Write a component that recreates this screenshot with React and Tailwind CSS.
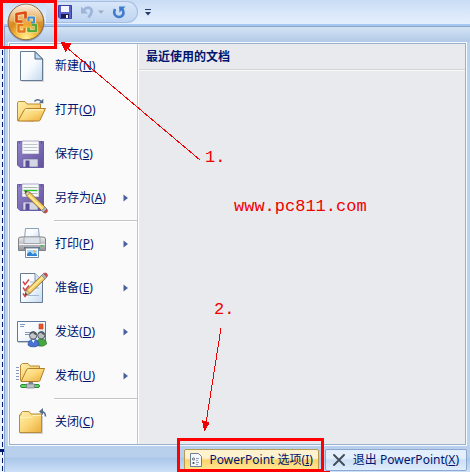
import { useState } from 'react';

const uiFont = "font-['Noto_Sans','Noto_Sans_CJK_SC',sans-serif]";

function Defs() {
    return (
        <svg width="0" height="0" className="absolute" aria-hidden="true">
            <defs>
                <linearGradient id="paper" x1="0" y1="0" x2="1" y2="1">
                    <stop offset="0" stopColor="#ffffff" /><stop offset="0.5" stopColor="#f6faff" /><stop offset="1" stopColor="#c3d9ee" />
                </linearGradient>
                <linearGradient id="folder" x1="0" y1="0" x2="1" y2="1">
                    <stop offset="0" stopColor="#fff0b0" /><stop offset="0.5" stopColor="#fbd778" /><stop offset="1" stopColor="#eaac3c" />
                </linearGradient>
                <linearGradient id="purple" x1="0" y1="0" x2="1" y2="1">
                    <stop offset="0" stopColor="#9485cc" /><stop offset="1" stopColor="#62529c" />
                </linearGradient>
                <linearGradient id="metal" x1="0" y1="0" x2="0" y2="1">
                    <stop offset="0" stopColor="#ededed" /><stop offset="0.45" stopColor="#c4c6ca" /><stop offset="1" stopColor="#8f9196" />
                </linearGradient>
                <radialGradient id="orb" cx="0.5" cy="0.95" r="0.95">
                    <stop offset="0" stopColor="#fff09a" /><stop offset="0.25" stopColor="#fbc545" /><stop offset="0.55" stopColor="#d98a1c" /><stop offset="1" stopColor="#e6c088" />
                </radialGradient>
                <linearGradient id="gloss" x1="0" y1="0" x2="0" y2="1">
                    <stop offset="0" stopColor="#ffffff" stopOpacity="0.8" /><stop offset="1" stopColor="#f3c27a" stopOpacity="0.35" />
                </linearGradient>
            </defs>
        </svg>
    );
}

// Shared by "save as" and "prepare"
function Pencil({ transform }) {
    return (
        <g transform={transform}>
            <path d="M0 0 L1.5 -5 L18 -21 L21.5 -17.5 L5 -1.5 Z" fill="#f6ca5c" stroke="#77603a" strokeWidth="0.8" />
            <path d="M3.5 -4 L19.5 -19.5" stroke="#fff0a8" strokeWidth="1.3" />
            <path d="M0 0 L1.5 -5 L5 -1.5 Z" fill="#e9d0aa" stroke="#77603a" strokeWidth="0.5" />
            <path d="M0 0 L0.7 -2.2 L2.2 -0.7 Z" fill="#222" />
            <path d="M16.5 -19.5 L18.5 -21.5 L22 -18 L20 -16 Z" fill="#a9b2bd" stroke="#70757c" strokeWidth="0.5" />
            <path d="M18.5 -21.5 Q20.8 -22.8 22 -21.3 Q23.2 -19.8 22 -18 Z" fill="#cf4a4a" stroke="#8e3434" strokeWidth="0.5" />
        </g>
    );
}

function Floppy() {
    return (
        <>
            <path d="M3.5 5.5 H29.5 V31.5 H6 L3.5 29 Z" fill="url(#purple)" stroke="#6a5ca6" />
            <path d="M8 5 H25 V18 H8 Z" fill="#f6f8fb" stroke="#8079ab" strokeWidth="0.6" />
            <path d="M9 23 H24 V31 H9 Z" fill="#d3d6e3" stroke="#6d629d" strokeWidth="0.6" />
            <path d="M11.5 24.5 H15.5 V31 H11.5 Z" fill="#5b4d95" />
            <path d="M5 7 H6 M27 7 H28" stroke="#443878" />
        </>
    );
}

const icons = {
    new: (
        <>
            <path d="M8 33.5 H29.5 V11" fill="none" stroke="#000" strokeOpacity="0.14" />
            <path d="M6.5 3.5 H21 L28.5 11 V32.5 H6.5 Z" fill="url(#paper)" stroke="#667a92" />
            <path d="M21 3.5 V11 H28.5 Z" fill="#bed7ef" stroke="#4d6480" strokeLinejoin="round" />
        </>
    ),
    open: (
        <>
            <path d="M3.5 28.5 V10.5 L5 9.5 H11 L13 12 H26.5 V17 L20 29 Z" fill="url(#folder)" stroke="#b98a38" />
            <path d="M4 29 L10.5 17.5 Q11 16.5 12.5 16.5 H31.5 L26 28.2 Q25.6 29 24.5 29 Z" fill="url(#folder)" stroke="#b27d27" />
            <path d="M11.5 17.8 H29.5" stroke="#fff6cc" />
            <path d="M20.5 9.5 Q23.5 5.8 28 10" fill="none" stroke="#576d8c" strokeWidth="1.4" />
            <path d="M29.3 6.8 V11.3 H24.8 Z" fill="#576d8c" />
        </>
    ),
    save: (
        <>
            <Floppy />
            <path d="M9.5 8.5 H23.5 M9.5 11.5 H23.5 M9.5 14.5 H23.5" stroke="#bfc4ca" />
        </>
    ),
    saveAs: (
        <>
            <g transform="translate(0 -1)">
                <Floppy />
                <path d="M9.5 8.5 H23.5 M9.5 14.5 H23.5" stroke="#aeb6b0" />
                <path d="M9.5 11.5 H23.5" stroke="#26c32c" strokeWidth="1.4" />
            </g>
            <Pencil transform="translate(11 11) scale(1 -1)" />
        </>
    ),
    print: (
        <>
            <path d="M10.5 13 L11.5 2.5 H24.5 L25.5 13 Z" fill="url(#paper)" stroke="#8ba0b8" />
            <path d="M4.5 13 Q4.5 11 7 11 H29 Q31.5 11 31.5 13 V24.5 H4.5 Z" fill="url(#metal)" stroke="#808286" />
            <path d="M10 11 H26 V17.5 H10 Z" fill="#dce2e9" stroke="#909398" strokeWidth="0.7" />
            <path d="M5 18.5 H31" stroke="#f4f4f4" />
            <path d="M10 21 H26 V23 H10 Z" fill="#6b6e73" />
            <path d="M26.5 19.8 H29.5" stroke="#39bf3d" strokeWidth="1.4" />
            <path d="M11.5 22 H24.5 V31.5 H11.5 Z" fill="#fff" stroke="#6b8cae" />
            <path d="M13 24 H23 V30 H13 Z" fill="#a8dcfb" />
            <path d="M13 30 V28 L16 25.5 L19 28.5 L21 26.8 L23 29 V30 Z" fill="#2f7fcd" />
            <circle cx="20.5" cy="25.2" r="1" fill="#f6a24e" />
        </>
    ),
    prepare: (
        <>
            <path d="M6.5 3.5 H21 L28.5 11 V32.5 H6.5 Z" fill="url(#paper)" stroke="#667a92" />
            <path d="M21 3.5 V11 H28.5" fill="#d5e6f6" stroke="#7f93ab" />
            <path d="M16 12 H24 M15 18 H25 M13 25.5 H25" stroke="#a4b9d2" />
            <path d="M9 11.5 L11 14.5 L15 9.5 M9 17.5 L11 20.5 L15 15.5 M9 23.5 L11 26.5 L14 22.5" fill="none" stroke="#d7434b" strokeWidth="1.5" />
            <Pencil transform="translate(11 25)" />
        </>
    ),
    send: (
        <>
            <path d="M4 28.5 H20" stroke="#000" strokeOpacity="0.2" />
            <path d="M3.5 7.5 H31.5 V27.5 H3.5 Z" fill="url(#paper)" stroke="#5f7a9f" />
            <path d="M6 10.5 H11 M6 12.5 H10" stroke="#7b9acb" />
            <path d="M11 18.5 H19 M11 20.5 H17" stroke="#7f97bb" />
            <path d="M25 10 H29 V15 H25 Z" fill="#e95426" stroke="#bf3d1d" strokeWidth="0.6" />
            <path d="M22.5 31 Q22 25 27 25 Q32.5 25 32.5 30 Q30 33 25 32 Z" fill="#46a83d" stroke="#28792a" strokeWidth="0.7" />
            <circle cx="27.3" cy="21.3" r="3.6" fill="#b9bec3" stroke="#4c5258" strokeWidth="0.9" />
            <path d="M24 20 Q24.5 17 28 17.2 Q31 18 30.7 21 Q28 20.5 27 18.8 Z" fill="#565c63" />
            <path d="M14 31 Q14 25.5 19.5 25.5 Q25 25.5 25 31 Q22 33.3 19 32.8 Q16 33.2 14 31 Z" fill="#4a72cf" stroke="#294a9c" strokeWidth="0.7" />
            <path d="M17.8 26 L19.3 29 L20.8 26 Z" fill="#fff" />
            <circle cx="19.2" cy="21.5" r="3.7" fill="#c5c9cc" stroke="#4c5258" strokeWidth="0.9" />
            <path d="M15.8 20.5 Q16 17.3 19.7 17.3 Q22.7 17.8 22.7 21.4 Q20 20.7 19 19 Z" fill="#565c63" />
        </>
    ),
    publish: (
        <>
            <path d="M2 9.5 H5 M2 12.5 H5 M2 15.5 H5 M2 18.5 H5 M2 21.5 H5" stroke="#8797c0" />
            <path d="M6.5 22.5 V7 L8.5 5.5 H14 L16 8 H25.5 V12 L22 23 Z" fill="url(#folder)" stroke="#b98a38" />
            <path d="M7 23.5 L12.5 12 Q13 10.5 14.5 10.5 H30.5 L26 22.5 Q25.6 23.5 24.5 23.5 Z" fill="url(#folder)" stroke="#b27d27" />
            <path d="M15 24 H18.5 V27 H15 Z" fill="#8b9096" stroke="#5e6368" strokeWidth="0.6" />
            <rect x="6.5" y="26.5" width="19" height="3" rx="1.5" fill="#5ed35f" stroke="#2c8b37" />
            <path d="M12.5 26 H20.5 V30 H12.5 Z" fill="#b9bec4" stroke="#6f757c" strokeWidth="0.7" />
        </>
    ),
    close: (
        <>
            <path d="M6 29.5 H28.5 V12" fill="none" stroke="#000" strokeOpacity="0.16" />
            <path d="M5.5 28.5 V11 H7 V9 L8.5 7.5 H15 L17 10 H27.5 V28.5 Z" fill="url(#folder)" stroke="#b98a38" />
            <path d="M6.5 13.5 H17 L18.5 11.5 H27" fill="none" stroke="#fff3bd" />
            <path d="M27.5 7.5 Q31.5 8 31.5 12.5" fill="none" stroke="#576d8c" strokeWidth="1.5" />
            <path d="M25 7.5 L29 4 V11 Z" fill="#576d8c" />
        </>
    ),
};

const groups = [
    [
        { icon: 'new', label: '新建', keyChar: 'N' },
        { icon: 'open', label: '打开', keyChar: 'O' },
        { icon: 'save', label: '保存', keyChar: 'S' },
        { icon: 'saveAs', label: '另存为', keyChar: 'A', sub: true },
    ],
    [
        { icon: 'print', label: '打印', keyChar: 'P', sub: true },
        { icon: 'prepare', label: '准备', keyChar: 'E', sub: true },
        { icon: 'send', label: '发送', keyChar: 'D', sub: true },
        { icon: 'publish', label: '发布', keyChar: 'U', sub: true },
    ],
    [
        { icon: 'close', label: '关闭', keyChar: 'C' },
    ],
];

function MenuItem({ item, onHover }) {
    return (
        <button onMouseEnter={onHover} className="flex w-full h-11 items-center pl-1 pr-2 gap-[5px] text-left hover:bg-[#ffe9a8]">
            <svg width="36" height="36" viewBox="0 0 36 36" aria-hidden="true">{icons[item.icon]}</svg>
            <span className="flex-1 whitespace-nowrap">{item.label}(<u>{item.keyChar}</u>)</span>
            {item.sub && (
                <svg width="6" height="8" viewBox="0 0 6 8" aria-hidden="true">
                    <path d="M0.5 0.5 L5 4 L0.5 7.5 Z" fill="#4a5f9e" />
                </svg>
            )}
        </button>
    );
}

function OfficeOrb() {
    return (
        <svg width="40" height="40" viewBox="0 0 40 40" aria-hidden="true">
            <circle cx="20" cy="20.8" r="18.5" fill="#63718c" fillOpacity="0.55" />
            <circle cx="20" cy="20" r="17.8" fill="url(#orb)" stroke="#8c6940" />
            <path d="M3.5 19 A16.5 16.5 0 0 1 36.5 19 Q20 24 3.5 19 Z" fill="url(#gloss)" />
            <g fill="none" stroke="#fff3cf" strokeOpacity="0.7" strokeLinejoin="round" strokeWidth="4">
                <path d="M16.5 19.5 H10.5 V12 L19.5 10.5 V16.5 M22.5 19 V15.5 H28 V20.5 H25 M17.5 23 H12.5 V29.5 H18.5 V26 M22.5 25.5 V29 H30 V23 H25.5" />
            </g>
            <g fill="none" strokeLinejoin="round">
                <path d="M16.5 19.5 H10.5 V12 L19.5 10.5 V16.5" stroke="#dd4a14" strokeWidth="2.7" />
                <path d="M22.5 19 V15.5 H28 V20.5 H25" stroke="#3f8fd6" strokeWidth="2.2" />
                <path d="M17.5 23 H12.5 V29.5 H18.5 V26" stroke="#e8741a" strokeWidth="2.4" />
                <path d="M22.5 25.5 V29 H30 V23 H25.5" stroke="#58a83a" strokeWidth="2.6" />
            </g>
        </svg>
    );
}

function TopBar() {
    return (
        <header className="flex h-[26px] items-center bg-linear-to-b from-[#c9dcf4] via-[#d8e7f9] to-[#e3effd] border-b-2 border-[#a6c8f3]">
            <button aria-label="Office" className="relative z-10 self-start ml-[2px] mt-[2px] w-10 h-10">
                <OfficeOrb />
            </button>
            <div className="flex h-[22px] items-center w-[92px] pl-3 rounded-r-full border border-l-0 border-[#a3bfe3] bg-linear-to-b from-[#d8e6f8] to-[#bfd5f0]">
                <button aria-label="保存">
                    <svg width="14" height="14" viewBox="0 0 14 14">
                        <path d="M0.5 0.5 H13.5 V13.5 H2 L0.5 12 Z" fill="#5a63cc" stroke="#3840a4" />
                        <path d="M3 1 H11 V7 H3 Z" fill="#f3f6ff" />
                        <path d="M3 9 H11 V13 H3 Z" fill="#1d1d52" />
                        <path d="M8 10 H10 V13 H8 Z" fill="#fff" />
                    </svg>
                </button>
                <button aria-label="撤消" className="ml-2">
                    <svg width="14" height="14" viewBox="0 0 14 14" fill="none">
                        <path d="M3.5 5.5 Q6.5 1.5 10 3 Q14 6 8.5 12.5" stroke="#9cb5d9" strokeWidth="2.8" />
                        <path d="M1 1.5 V8.5 H8 Z" fill="#9cb5d9" />
                    </svg>
                </button>
                <button aria-label="撤消选项" className="ml-1">
                    <svg width="6" height="4" viewBox="0 0 6 4"><path d="M0 0.5 H6 L3 3.8 Z" fill="#9eacc2" /></svg>
                </button>
                <button aria-label="恢复" className="ml-2">
                    <svg width="14" height="14" viewBox="0 0 14 14" fill="none">
                        <path d="M3 4 Q1 9 4 11 Q7 13 10 11 Q13 8 10 3.5" stroke="#3f7ccc" strokeWidth="2.6" />
                        <path d="M7 1.5 H13.5 L7.5 7.5 Z" fill="#3f7ccc" />
                    </svg>
                </button>
            </div>
            <button aria-label="自定义快速访问工具栏" className="ml-[7px]">
                <svg width="6" height="7" viewBox="0 0 6 7">
                    <path d="M0 0.5 H6" stroke="#25406f" />
                    <path d="M0 3 H6 L3 6.5 Z" fill="#25406f" />
                </svg>
            </button>
        </header>
    );
}

function Annotations() {
    return (
        <div className="absolute inset-0 z-20 pointer-events-none overflow-hidden font-['Liberation_Mono',monospace] text-[17px] leading-5 text-[#f00000]">
            <div className="absolute left-0 top-0 w-[57px] h-[49px] border-3 border-[#ff0000]" />
            <div className="absolute left-[177px] top-[438px] w-[147px] h-[34px] border-3 border-[#ff0000]" />
            <svg width="470" height="472" viewBox="0 0 470 472" className="absolute left-0 top-0" shapeRendering="crispEdges" stroke="#f00000" fill="#f00000">
                <path d="M200 160 L66 47 M221 328 L206 423 M323 471.5 H330" />
                <path d="M61.5 42.5 L71 44 L65.5 51 Z M202.5 421 L209 423 L204.5 430.5 Z" />
            </svg>
            <span className="absolute left-[205px] top-[148px]">1.</span>
            <span className="absolute left-[234px] top-[197px]">www.pc811.com</span>
            <span className="absolute left-[214px] top-[300px]">2.</span>
        </div>
    );
}

export default function App() {
    const [active, setActive] = useState(null);

    return (
        <div className={`relative flex text-xs text-[#00156e] bg-[#eaf2fc] ${uiFont}`}>
            <Defs />
            {/* selection marker down the left edge */}
            <svg width="4" className="shrink-0 self-stretch h-auto" aria-hidden="true">
                <line x1="2.5" y1="2" x2="2.5" y2="100%" stroke="#00156e" strokeDasharray="5 3" />
                <path d="M0 449 H4 V452 H0 Z" fill="#00156e" />
            </svg>

            <div className="flex-1 min-w-0">
                <TopBar />
                <div className="border-l border-t border-[#8aa5cc] bg-[#bdd4ef]">
                    <div className="h-[15px] bg-linear-to-b from-[#d3e3f4] to-[#b2cae7]" />
                    <div className="mx-[3px] border border-[#f4f9ff]">
                        <div className="flex border border-[#9bb0cc]">
                            <nav aria-label="Office" className="w-[128px] shrink-0 bg-[#fafafa] border-r border-[#c5c5c5]">
                                {groups.map((items, i) => (
                                    <div key={i}>
                                        {i > 0 && <div className="ml-11 h-[2px] border-t border-[#c5c5c5] bg-white" />}
                                        {items.map(item => (
                                            <MenuItem key={item.icon} item={item} onHover={() => setActive(item.icon)} />
                                        ))}
                                    </div>
                                ))}
                            </nav>
                            <section className="flex-1 bg-[#e9eaee] border-l border-white" data-active={active}>
                                <h2 className="h-[26px] px-[7px] font-bold leading-[26px] border-b border-[#d3d5d3]">最近使用的文档</h2>
                                <div className="h-px bg-[#f8f8f8]" />
                            </section>
                        </div>
                    </div>
                    <footer className="flex h-[27px] items-center justify-end gap-[6px] pr-[3px] bg-linear-to-b from-[#b9d0ed] from-40% via-[#a9c6e9] via-45% to-[#cfe2f8] whitespace-nowrap">
                        <button className="flex h-[22px] items-center gap-2 px-[5px] rounded-xs border border-[#b99a52] bg-linear-to-b from-[#fff3cf] from-40% via-[#fbd368] via-50% to-[#ffe795]">
                            <svg width="12" height="14" viewBox="0 0 12 14" aria-hidden="true">
                                <path d="M0.5 0.5 H8.5 L11.5 3.5 V13.5 H0.5 Z" fill="#f4f8fc" stroke="#6c7d94" />
                                <circle cx="3.5" cy="6" r="1.1" fill="none" stroke="#444f61" strokeWidth="0.8" />
                                <circle cx="3.5" cy="10" r="1.1" fill="#444f61" />
                                <path d="M6 5.5 H9 M6 7.5 H8 M6 9.5 H9 M6 11.5 H8" stroke="#7c8ba1" strokeWidth="0.8" />
                            </svg>
                            <span>PowerPoint 选项(<u>I</u>)</span>
                        </button>
                        <button className="flex h-[22px] items-center gap-2 px-[7px] rounded-xs border border-[#8ba9d2] bg-linear-to-b from-[#e3effc] from-40% via-[#cddff5] via-50% to-[#dfedfc]">
                            <svg width="12" height="12" viewBox="0 0 12 12" aria-hidden="true">
                                <path d="M1 1 L11 11 M11 1 L1 11" stroke="#444b58" strokeWidth="1.9" strokeLinecap="round" />
                            </svg>
                            <span>退出 PowerPoint(<u>X</u>)</span>
                        </button>
                    </footer>
                </div>
            </div>
            <Annotations />
        </div>
    );
}
